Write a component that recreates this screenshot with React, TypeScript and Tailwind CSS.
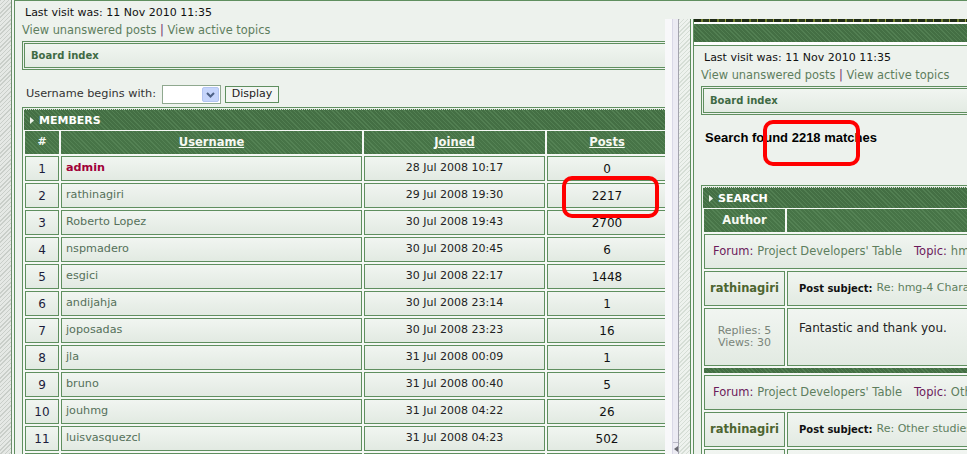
import React from "react";

const GREEN_LINE = "bg-[#5f8f5f]";
const BAR =
  "bg-[repeating-linear-gradient(45deg,#527f52_0px,#527f52_1px,#446f44_1px,#446f44_3px)]";
const CELL =
  "border border-[#5f8f5f] bg-linear-to-b from-[#f1f5f1] to-[#e2eae2]";
const HEAD =
  "bg-[repeating-linear-gradient(45deg,#548254_0px,#548254_1px,#477447_1px,#477447_3px)] text-[#f6f9f2] font-bold";

type Member = { n: number; name: string; joined: string; posts: string };

const members: Member[] = [
  { n: 1, name: "admin", joined: "28 Jul 2008 10:17", posts: "0" },
  { n: 2, name: "rathinagiri", joined: "29 Jul 2008 19:30", posts: "2217" },
  { n: 3, name: "Roberto Lopez", joined: "30 Jul 2008 19:43", posts: "2700" },
  { n: 4, name: "nspmadero", joined: "30 Jul 2008 20:45", posts: "6" },
  { n: 5, name: "esgici", joined: "30 Jul 2008 22:17", posts: "1448" },
  { n: 6, name: "andijahja", joined: "30 Jul 2008 23:14", posts: "1" },
  { n: 7, name: "joposadas", joined: "30 Jul 2008 23:23", posts: "16" },
  { n: 8, name: "jla", joined: "31 Jul 2008 00:09", posts: "1" },
  { n: 9, name: "bruno", joined: "31 Jul 2008 00:40", posts: "5" },
  { n: 10, name: "jouhmg", joined: "31 Jul 2008 04:22", posts: "26" },
  { n: 11, name: "luisvasquezcl", joined: "31 Jul 2008 04:23", posts: "502" },
  { n: 12, name: "fcasali", joined: "31 Jul 2008 05:02", posts: "3" },
];

function Arrow() {
  return (
    <svg width="4" height="7" viewBox="0 0 4 7" className="shrink-0">
      <polygon points="0,0 4,3.5 0,7" fill="#eef3ea" />
    </svg>
  );
}

function ForumTop() {
  return (
    <div className="border-t border-[#5f8f5f]">
      <div className="pl-[10px] pt-[5px] text-[11px] leading-[14px] text-[#111] whitespace-nowrap">
        Last visit was: 11 Nov 2010 11:35
      </div>
      <div className="pl-[7px] mt-[2px] text-[11.4px] leading-[16px] text-[#5e7e5e] whitespace-nowrap">
        View unanswered posts <span className="text-[#6a2a6a]">|</span> View
        active topics
      </div>
      <div className="ml-[7px] mt-[3px] border border-r-0 border-[#5f8f5f] p-px pr-0">
        <div className="h-[25px] border border-r-0 border-[#5f8f5f] bg-linear-to-b from-[#f1f5f1] to-[#e3ebe3] flex items-center pl-[6px] text-[10px] font-bold text-[#3f6a44] whitespace-nowrap">
          Board index
        </div>
      </div>
    </div>
  );
}

function SectionBar({ label }: { label: string }) {
  return (
    <div
      className={`ml-px h-[21px] border-t border-dotted border-[#d5e2d5] ${BAR} flex items-center pl-[6px] text-[11px] font-bold text-white`}
    >
      <Arrow />
      <span className="ml-[5px] leading-none">{label}</span>
    </div>
  );
}

function MemberList() {
  return (
    <div className="mt-[3px] ml-[7px] border-t border-l border-[#5f8f5f] pt-px">
      <SectionBar label="MEMBERS" />
      <div className="grid grid-cols-[34px_301px_181px_120px_240px] gap-[2px] pl-[2px] pt-px bg-[#f5f8f5]">
        <div className={`h-[23px] ${HEAD} text-[11px] flex items-center justify-center`}>#</div>
        <div className={`h-[23px] ${HEAD} text-[11.5px] flex items-center justify-center underline`}>Username</div>
        <div className={`h-[23px] ${HEAD} text-[11.5px] flex items-center justify-center underline`}>Joined</div>
        <div className={`h-[23px] ${HEAD} text-[11.5px] flex items-center justify-center underline`}>Posts</div>
        <div className={`h-[23px] ${HEAD} text-[11.5px] flex items-center justify-center underline`}>Rank</div>
        {members.map((m) => (
          <React.Fragment key={m.n}>
            <div className={`h-[25px] ${CELL} flex items-center justify-center text-[12px] text-[#1c1c3c]`}>
              {m.n}
            </div>
            <div
              className={`h-[25px] ${CELL} flex items-center pl-[4px] text-[11.2px] whitespace-nowrap ${
                m.name === "admin" ? "font-bold text-[#a10038]" : "text-[#55705a]"
              }`}
            >
              {m.name}
            </div>
            <div className={`h-[25px] ${CELL} flex items-center justify-center text-[11px] text-[#222]`}>
              {m.joined}
            </div>
            <div className={`h-[25px] ${CELL} flex items-center justify-center text-[12px] text-[#111]`}>
              {m.posts}
            </div>
            <div className={`h-[25px] ${CELL}`} />
          </React.Fragment>
        ))}
      </div>
    </div>
  );
}

function ForumRow({ topic }: { topic: string }) {
  return (
    <div className={`col-span-2 h-[35px] ${CELL} flex items-center pl-[8px] text-[11.5px] whitespace-nowrap`}>
      <span className="text-[#6b1a5b]">Forum:</span>
      <span className="ml-[4px] text-[#5e7e5e]">Project Developers' Table</span>
      <span className="ml-[12px] text-[#6b1a5b]">Topic:</span>
      <span className="ml-[4px] text-[#5e7e5e]">{topic}</span>
    </div>
  );
}

function AuthorRow({ subject }: { subject: string }) {
  return (
    <>
      <div className={`h-[35px] ${CELL} flex items-center justify-center text-[11.5px] font-bold text-[#4d6530]`}>
        rathinagiri
      </div>
      <div className={`h-[35px] ${CELL} flex items-center pl-[11px] whitespace-nowrap`}>
        <span className="text-[10px] font-bold text-[#111]">Post subject:</span>
        <span className="ml-[4px] text-[11px] text-[#5e7e5e]">{subject}</span>
      </div>
    </>
  );
}

function SearchWindow() {
  return (
    <div className="absolute left-[665px] top-[19px] w-[302px] h-[435px] flex bg-[#edf2ed]">
      <div className="w-[7px] bg-[#f8f8fa]" />
      <div className="relative w-[7px] bg-[#ecebf3] border-l border-[#d9d8e6] border-r border-r-[#a3a3ad]">
        <div className="absolute bottom-0 left-0 right-0 h-[12px] border-t border-[#b9b8c6] flex items-center justify-center">
          <svg width="4" height="6" viewBox="0 0 4 6">
            <polygon points="4,0 0,3 4,6" fill="#6a6a72" />
          </svg>
        </div>
      </div>
      <div className="w-[11px] bg-[repeating-linear-gradient(135deg,#d6ded6_0px,#d6ded6_1px,#eef2ee_1px,#eef2ee_3px)]" />
      <div className={`w-px ${GREEN_LINE}`} />
      <div className="w-[2px] bg-[#f3f6f3]" />
      <div className={`w-px ${GREEN_LINE}`} />
      <div className="flex-1 min-w-0 overflow-hidden">
        <div className="h-[3px] bg-[repeating-linear-gradient(90deg,#1e2a15_0px,#1e2a15_7px,#6f7d2c_7px,#6f7d2c_9px,#2b3a1c_9px,#2b3a1c_15px,#9aa03e_15px,#9aa03e_16px)]" />
        <div className="h-[2px] bg-white" />
        <div className={`h-[18px] ${BAR}`} />
        <div className="h-[3px] bg-white" />
        <ForumTop />
        <div className="pl-[11px] mt-[15px] text-[13px] leading-[16px] font-bold font-['Liberation_Sans',sans-serif] text-black whitespace-nowrap">
          Search found 2218 matches
        </div>
        <div className="mt-[39px] ml-[7px] border-t border-l border-[#5f8f5f] pt-px">
          <SectionBar label="SEARCH" />
          <div className="grid grid-cols-[81px_400px] gap-[2px] pl-[2px] pt-px bg-[#f5f8f5]">
            <div className={`h-[23px] ${HEAD} text-[11.5px] flex items-center justify-center`}>Author</div>
            <div className={`h-[23px] ${HEAD}`} />

            <ForumRow topic="hmg-4 Characteristics" />
            <AuthorRow subject="Re: hmg-4 Characteristics" />
            <div className={`h-[58px] ${CELL} flex flex-col items-center justify-center text-[11px] leading-[12px] text-[#7a857a]`}>
              <span>Replies: 5</span>
              <span>Views: 30</span>
            </div>
            <div className={`h-[58px] ${CELL} pl-[11px] pt-[11px] text-[12px] leading-[16px] text-[#222]`}>
              Fantastic and thank you.
            </div>
            <div className={`col-span-2 h-[5px] ${BAR}`} />

            <ForumRow topic="Other studies" />
            <AuthorRow subject="Re: Other studies" />
            <div className={`h-[58px] ${CELL}`} />
            <div className={`h-[58px] ${CELL}`} />
          </div>
        </div>
      </div>
    </div>
  );
}

export default function App() {
  return (
    <div className="relative w-[967px] h-[454px] overflow-hidden bg-[#edf2ed] font-['DejaVu_Sans',sans-serif] flex">
      <div className="w-[11px] bg-[repeating-linear-gradient(135deg,#c9cec9_0px,#c9cec9_1px,#e5e8e5_1px,#e5e8e5_3px)]" />
      <div className="w-px bg-[#6f8f6f]" />
      <div className="w-[2px] bg-[#f3f6f3]" />
      <div className={`w-px ${GREEN_LINE}`} />
      <div className="flex-1 min-w-0 overflow-hidden">
        <ForumTop />
        <div className="mt-[15px] h-[19px] flex items-center text-[11.3px] text-[#333]">
          <div className="w-[147px] pl-[11px] whitespace-nowrap">Username begins with:</div>
          <div className="w-[59px] h-[19px] border border-[#8fa88f] bg-white flex items-center justify-end pr-px">
            <div className="w-[17px] h-[15px] bg-[#c6d5fb] border border-[#b3c5f1] rounded-[2px] flex items-center justify-center">
              <svg width="9" height="6" viewBox="0 0 9 6">
                <polyline points="1,1 4.5,4.5 8,1" fill="none" stroke="#4d6185" strokeWidth="2" />
              </svg>
            </div>
          </div>
          <div className="ml-[4px] w-[54px] h-[17px] border border-[#5f8f5f] bg-[#f3f6f3] flex items-center justify-center text-[11px] text-[#222]">
            Display
          </div>
        </div>
        <MemberList />
      </div>

      <SearchWindow />

      <div className="absolute left-[562px] top-[176px] w-[97px] h-[42px] border-4 border-[#ff0000] rounded-[10px]" />
      <div className="absolute left-[763px] top-[120px] w-[97px] h-[46px] border-4 border-[#ff0000] rounded-[10px]" />
    </div>
  );
}
